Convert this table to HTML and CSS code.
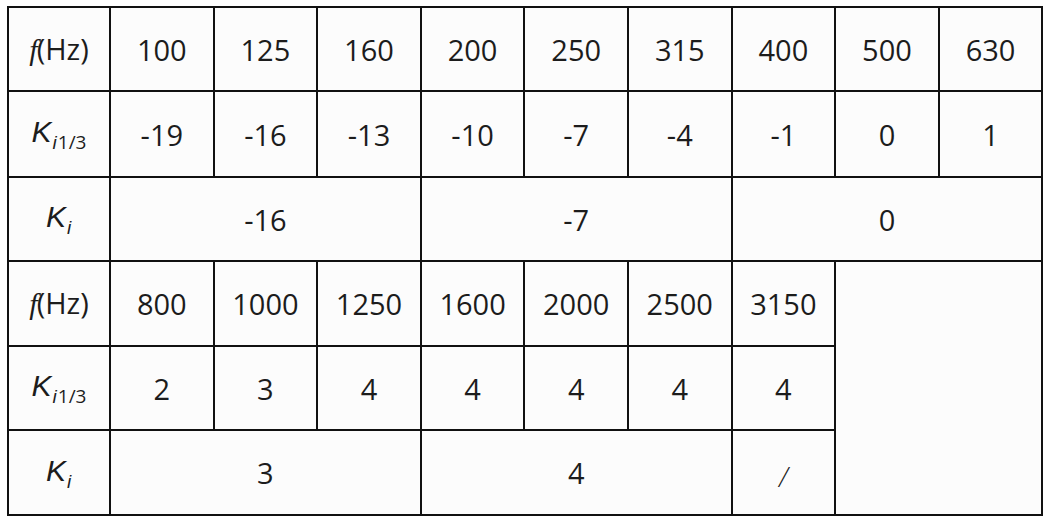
FILE: index.html
```html
<!DOCTYPE html>
<html lang="zh">
<head>
<meta charset="utf-8">
<title>Ki table</title>
<link rel="stylesheet" href="styles.css">
</head>
<body>
<table class="freq-table">
  <colgroup>
    <col class="col-head">
    <col class="col-val"><col class="col-val"><col class="col-val">
    <col class="col-val"><col class="col-val"><col class="col-val">
    <col class="col-val"><col class="col-val"><col class="col-val">
  </colgroup>
  <tbody>
    <tr class="r1">
      <th><span class="sym-f">f</span>(Hz)</th>
      <td>100</td><td>125</td><td>160</td><td>200</td><td>250</td><td>315</td><td>400</td><td>500</td><td>630</td>
    </tr>
    <tr class="r2">
      <th><span class="sym-k">K</span><sub class="sub"><span class="sub-i">i</span>1/3</sub></th>
      <td>-19</td><td>-16</td><td>-13</td><td>-10</td><td>-7</td><td>-4</td><td>-1</td><td>0</td><td>1</td>
    </tr>
    <tr class="r3">
      <th><span class="sym-k">K</span><sub class="sub"><span class="sub-i">i</span></sub></th>
      <td colspan="3">-16</td><td colspan="3">-7</td><td colspan="3">0</td>
    </tr>
    <tr class="r4">
      <th><span class="sym-f">f</span>(Hz)</th>
      <td>800</td><td>1000</td><td>1250</td><td>1600</td><td>2000</td><td>2500</td><td>3150</td>
      <td colspan="2" rowspan="3" class="empty"></td>
    </tr>
    <tr class="r5">
      <th><span class="sym-k">K</span><sub class="sub"><span class="sub-i">i</span>1/3</sub></th>
      <td>2</td><td>3</td><td>4</td><td>4</td><td>4</td><td>4</td><td>4</td>
    </tr>
    <tr class="r6">
      <th><span class="sym-k">K</span><sub class="sub"><span class="sub-i">i</span></sub></th>
      <td colspan="3">3</td><td colspan="3">4</td><td class="slash"><span class="slash-mark">/</span></td>
    </tr>
  </tbody>
</table>
</body>
</html>
```

FILE: styles.css
```css
html, body {
  margin: 0;
  padding: 0;
  background: #ffffff;
}

body {
  padding: 6px 0 0 7px;
}

.freq-table {
  border-collapse: collapse;
  table-layout: fixed;
  width: 1034px;
  background: #fcfcfc;
  font-family: "Open Sans", "Noto Sans", "Noto Sans CJK SC", sans-serif;
  font-size: 29px;
  color: #1c1c1c;
}

.col-head { width: 102px; }
.col-val { width: 103.6px; }

.freq-table th,
.freq-table td {
  border: 2px solid #111;
  text-align: center;
  vertical-align: middle;
  font-weight: 400;
  padding: 0;
  line-height: 1;
}

.r1 th, .r1 td { height: 82px; }
.r2 th, .r2 td { height: 84px; }
.r3 th, .r3 td { height: 82px; }
.r4 th, .r4 td { height: 83px; }
.r5 th, .r5 td { height: 82px; }
.r6 th, .r6 td { height: 83px; }

.sym-f {
  font-family: "Liberation Serif", serif;
  font-style: italic;
  font-size: 30px;
  margin-right: -1px;
}

.sym-k {
  font-family: "Liberation Sans", sans-serif;
  font-style: italic;
  font-size: 30px;
}

.sub {
  font-size: 19px;
  vertical-align: -7px;
  line-height: 1;
}

.sub-i {
  font-family: "Liberation Sans", sans-serif;
  font-style: italic;
  margin-left: 1px;
  margin-right: 1px;
}

.slash-mark {
  display: inline-block;
  font-size: 27px;
  font-weight: 300;
  font-style: italic;
  position: relative;
  top: 3px;
}
```
